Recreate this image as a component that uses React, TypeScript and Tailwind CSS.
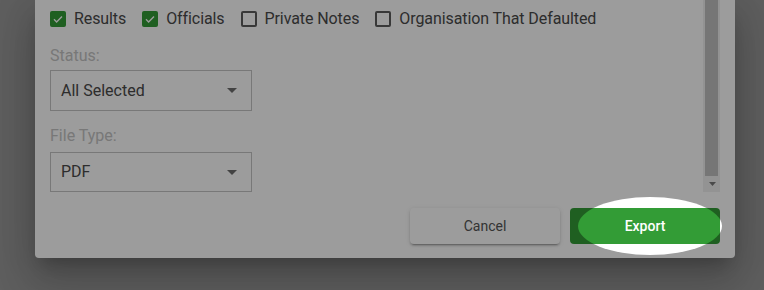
import React from "react";

const checks = [
  { label: "Results", checked: true },
  { label: "Officials", checked: true },
  { label: "Private Notes", checked: false },
  { label: "Organisation That Defaulted", checked: false },
];

function Box({ checked }: { checked: boolean }) {
  if (checked) {
    return (
      <span className="flex h-4 w-4 shrink-0 items-center justify-center rounded-[2px] bg-[#339c36]">
        <svg viewBox="0 0 16 16" className="h-4 w-4" fill="none">
          <path d="M4 8.3l2.6 2.6L12 5.4" stroke="#fff" strokeWidth="1.4" />
        </svg>
      </span>
    );
  }
  return <span className="h-4 w-4 shrink-0 rounded-[2px] border-2 border-[#5c5c5c]" />;
}

function Select({ value, className }: { value: string; className: string }) {
  return (
    <div className={`flex w-[202px] items-center justify-between border border-[#c4c4c4] pl-[10px] pr-[14px] text-[16px] text-[#4a4a4a] ${className}`}>
      <span>{value}</span>
      <svg viewBox="0 0 10 5" className="h-[5px] w-[10px]">
        <path d="M0 0h10L5 5z" fill="#6e6e6e" />
      </svg>
    </div>
  );
}

export default function App() {
  return (
    <div className="relative h-[290px] w-[764px] overflow-hidden bg-[#9b9b9b] font-['Roboto',sans-serif]">
      <div className="ml-[35px] w-[700px] rounded-b-[4px] bg-white shadow-[0_11px_15px_-7px_rgba(0,0,0,0.2),0_24px_38px_3px_rgba(0,0,0,0.14),0_9px_46px_8px_rgba(0,0,0,0.12)]">
        <div className="flex h-[192px] px-[15px]">
          <div className="flex flex-1 flex-col">
            <div className="flex h-[36px] items-center gap-4 pt-[1px]">
              {checks.map((c) => (
                <label key={c.label} className="flex items-center gap-2 text-[16px] tracking-[-0.09px] text-[#4a4a4a]">
                  <Box checked={c.checked} />
                  {c.label}
                </label>
              ))}
            </div>
            <div className="mt-[10px] text-[16px] leading-[19px] text-[#c4c4c4]">Status:</div>
            <Select value="All Selected" className="mt-[5px] h-[41px]" />
            <div className="mt-[15px] text-[16px] leading-[19px] text-[#c4c4c4]">File Type:</div>
            <Select value="PDF" className="mt-[7px] h-[40px]" />
          </div>
          {/* scrollbar */}
          <div className="flex w-[17px] flex-col bg-[#f1f1f1]">
            <div className="mx-[2px] flex-1 bg-[#c1c1c1]" />
            <div className="flex h-4 items-center justify-center">
              <svg viewBox="0 0 7 4" className="ml-[1px] h-[4px] w-[7px]">
                <path d="M0 0h7L3.5 4z" fill="#7a7a7a" />
              </svg>
            </div>
          </div>
        </div>
        <div className="flex justify-end gap-[10px] px-[15px] pb-[14px] pt-[16px]">
          <button className="h-[36px] w-[150px] rounded-[4px] bg-white text-[14px] text-[#555] shadow-[0_3px_1px_-2px_rgba(0,0,0,0.2),0_2px_2px_0_rgba(0,0,0,0.14),0_1px_5px_0_rgba(0,0,0,0.12)]">
            Cancel
          </button>
          <button className="h-[36px] w-[150px] rounded-[4px] bg-[#339c36] text-[14px] font-medium text-white">
            Export
          </button>
        </div>
      </div>
      {/* spotlight overlay */}
      <div className="pointer-events-none absolute left-[578px] top-[197px] h-[58px] w-[144px] rounded-[50%] shadow-[0_0_0_2000px_rgba(0,0,0,0.39)]" />
    </div>
  );
}
